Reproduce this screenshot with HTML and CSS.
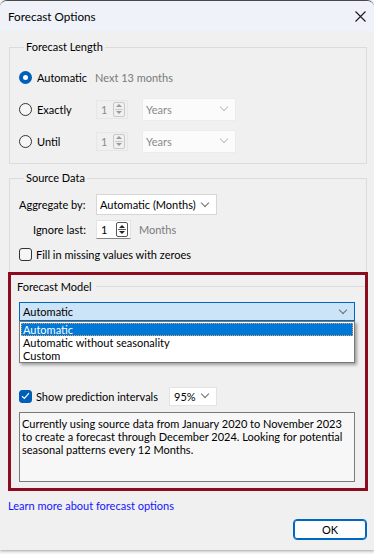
FILE: index.html
```html
<!DOCTYPE html>
<html lang="en">

<head>
    <meta charset="UTF-8" />
    <title>Forecast Options</title>
    <link rel="stylesheet" href="styles.css">
</head>

<body>
    <div class="window">
        <div class="titlebar">
            <span class="title">Forecast Options</span>
            <svg class="close" width="11" height="11" viewBox="0 0 11 11">
                <path d="M0.5 0.5 L10.5 10.5 M10.5 0.5 L0.5 10.5" stroke="#1a1a1a" stroke-width="1.1" fill="none" />
            </svg>
        </div>

        <div class="content">
            <fieldset class="group group-length">
                <legend>Forecast Length</legend>
                <div class="row">
                    <span class="radio checked"></span>
                    <span class="row-label">Automatic</span>
                    <span class="muted">Next 13 months</span>
                </div>
                <div class="row">
                    <span class="radio"></span>
                    <span class="row-label fixed">Exactly</span>
                    <span class="spin disabled">1<span class="spin-arrows"><i class="up"></i><i class="down"></i></span></span>
                    <span class="combo disabled years">Years<span class="chev"></span></span>
                </div>
                <div class="row">
                    <span class="radio"></span>
                    <span class="row-label fixed">Until</span>
                    <span class="spin disabled">1<span class="spin-arrows"><i class="up"></i><i class="down"></i></span></span>
                    <span class="combo disabled years">Years<span class="chev"></span></span>
                </div>
            </fieldset>

            <fieldset class="group group-source">
                <legend>Source Data</legend>
                <div class="row row-src">
                    <span class="field-label">Aggregate by:</span>
                    <span class="combo aggregate">Automatic (Months)<span class="chev"></span></span>
                </div>
                <div class="row row-src">
                    <span class="field-label indent">Ignore last:</span>
                    <span class="spin active">1<span class="spin-arrows"><i class="up"></i><i class="down"></i></span></span>
                    <span class="muted unit">Months</span>
                </div>
                <div class="row row-src">
                    <span class="checkbox"></span>
                    <span class="check-label">Fill in missing values with zeroes</span>
                </div>
            </fieldset>

            <div class="highlight">
                <div class="model-head"><span>Forecast Model</span></div>

                <div class="model-select">
                    <div class="combo selected">Automatic<span class="chev"></span></div>
                    <ul class="dropdown">
                        <li class="item active">Automatic</li>
                        <li class="item">Automatic without seasonality</li>
                        <li class="item">Custom</li>
                    </ul>
                </div>

                <div class="row row-intervals">
                    <span class="checkbox checked">
                        <svg width="9" height="8" viewBox="0 0 9 8">
                            <path d="M1 4.2 L3.4 6.5 L8 1.2" stroke="#fff" stroke-width="1.2" fill="none" />
                        </svg>
                    </span>
                    <span class="check-label wide">Show prediction intervals</span>
                    <span class="combo percent">95%<span class="chev"></span></span>
                </div>

                <div class="summary">
                    Currently using source data from January 2020 to November 2023<br>
                    to create a forecast through December 2024. Looking for potential<br>
                    seasonal patterns every 12 Months.
                </div>
            </div>

            <div class="link">Learn more about forecast options</div>

            <div class="actions">
                <span class="btn">OK</span>
            </div>
        </div>
    </div>
</body>

</html>
```

FILE: styles.css
```css
* {
    margin: 0;
    padding: 0;
    box-sizing: border-box;
}

body {
    font-family: 'Lato', 'Noto Sans', sans-serif;
    font-size: 11px;
    color: #000;
    background: #f7f7f7;
    width: 374px;
    height: 554px;
    overflow: hidden;
    white-space: nowrap;
}

.window {
    background: #f0f0f0;
    border-top: 1px solid #4a4a4a;
    border-radius: 7px 7px 0 0;
    height: 550px;
    box-shadow: 0 1px 3px rgba(0, 0, 0, 0.35);
    overflow: hidden;
}

.titlebar {
    height: 30px;
    background: #eff3f9;
    display: flex;
    align-items: center;
    justify-content: space-between;
    padding: 0 8px 0 8px;
}

.title {
    font-size: 11.7px;
    line-height: 16px;
}

.content {
    padding: 8px 7px 0 9px;
    display: flex;
    flex-direction: column;
}

/* Group boxes */
.group {
    border: 1px solid #dcdcdc;
    padding: 0 9px;
    min-width: 0;
}

.group legend {
    margin-left: 5px;
    padding: 0 2px;
    line-height: 16px;
    height: 16px;
}

.group-length {
    padding-top: 6px;
    padding-bottom: 6px;
}

.group-source {
    margin-top: 6px;
    border-bottom: none;
    padding-top: 6px;
    padding-bottom: 5px;
}

.row {
    display: flex;
    align-items: center;
    height: 32px;
}

.row-src {
    height: 25px;
}

.radio {
    width: 13px;
    height: 13px;
    border-radius: 50%;
    border: 1px solid #333;
    background: #f6f6f6;
    margin-right: 5px;
    flex: none;
}

.radio.checked {
    border: none;
    background: #005fb8;
    position: relative;
}

.radio.checked::after {
    content: '';
    position: absolute;
    left: 4px;
    top: 4px;
    width: 5px;
    height: 5px;
    border-radius: 50%;
    background: #fff;
}

.row-label {
    width: 58px;
}

.row-label.fixed {
    width: 59px;
}

.muted {
    color: #7a7a7a;
}

/* Spinners */
.spin {
    display: flex;
    align-items: center;
    justify-content: space-between;
    height: 19px;
    padding: 0 2px 0 4px;
    flex: none;
}

.spin.disabled {
    width: 32px;
    border: 1px solid #e6e6e6;
    color: #8a8a8a;
    margin-right: 14px;
}

.spin.active {
    width: 35px;
    background: #fff;
    border: 1px solid #e3e3e3;
    border-bottom-color: #868686;
    margin-right: 8px;
}

.spin-arrows {
    width: 12px;
    height: 15px;
    border: 1px solid #c9c9c9;
    border-radius: 2px;
    display: flex;
    flex-direction: column;
    align-items: center;
    justify-content: space-around;
    position: relative;
}

.spin-arrows::after {
    content: '';
    position: absolute;
    left: 1px;
    right: 1px;
    top: 6px;
    height: 1px;
    background: #c9c9c9;
}

.spin.active .spin-arrows {
    border-color: #555;
}

.spin.active .spin-arrows::after {
    background: #555;
}

.spin-arrows i {
    width: 0;
    height: 0;
    border-left: 3px solid transparent;
    border-right: 3px solid transparent;
}

.spin-arrows .up {
    border-bottom: 3px solid #9a9a9a;
}

.spin-arrows .down {
    border-top: 3px solid #9a9a9a;
}

.spin.active .spin-arrows .up {
    border-bottom-color: #222;
}

.spin.active .spin-arrows .down {
    border-top-color: #222;
}

/* Combo boxes */
.combo {
    display: flex;
    align-items: center;
    justify-content: space-between;
    background: #fff;
    border: 1px solid #d6d6d6;
    height: 21px;
    padding: 0 8px 0 3px;
    flex: none;
}

.chev {
    width: 6px;
    height: 6px;
    border-right: 1px solid #6e6e6e;
    border-bottom: 1px solid #6e6e6e;
    transform: translateY(-2px) rotate(45deg);
}

.combo.disabled {
    background: #fbfbfb;
    border-color: #ececec;
    color: #8a8a8a;
    height: 23px;
}

.combo.disabled .chev {
    border-color: #c2c2c2;
}

.combo.years {
    width: 94px;
}

.field-label {
    width: 77px;
    flex: none;
}

.field-label.indent {
    padding-left: 14px;
}

.combo.aggregate {
    width: 121px;
}

.checkbox {
    width: 13px;
    height: 13px;
    border: 1px solid #333;
    border-radius: 3px;
    background: #f6f6f6;
    margin-right: 4px;
    flex: none;
    display: flex;
    align-items: center;
    justify-content: center;
}

.checkbox.checked {
    background: #005fb8;
    border-color: #005fb8;
}

/* Highlighted model section */
.highlight {
    margin: 0 -1px;
    border: 3px solid #8c0b1f;
    padding: 3px 10px 6px 8px;
    display: flex;
    flex-direction: column;
}

.model-head {
    display: flex;
    align-items: center;
    height: 16px;
    margin-left: -2px;
    margin-right: -10px;
}

.model-head::after {
    content: '';
    flex: 1;
    height: 1px;
    background: #dcdcdc;
    margin-left: 4px;
}

.model-select {
    margin-top: 8px;
    position: relative;
}

.combo.selected {
    height: 19px;
    background: #cce4f7;
    border-color: #0067c0;
    padding: 0 8px 0 3px;
}

.dropdown {
    position: absolute;
    left: 0;
    right: 0;
    top: 19px;
    list-style: none;
    background: #fff;
    border: 1px solid #7a7a7a;
    padding: 0 1px;
    box-shadow: 2px 2px 3px rgba(0, 0, 0, 0.35);
    z-index: 2;
}

.item {
    height: 13px;
    line-height: 13px;
    padding-left: 2px;
}

.item.active {
    margin-top: 1px;
    background: #0078d7;
    color: #fff;
    outline: 1px dotted #e8a050;
    outline-offset: -1px;
}

.row-intervals {
    margin-top: 65px;
    height: 20px;
}

.check-label.wide {
    width: 133px;
    flex: none;
}

.combo.percent {
    width: 48px;
    height: 19px;
    border-color: #e3e3e3;
    padding: 0 8px 0 4px;
}

.summary {
    margin-top: 6px;
    height: 70px;
    border: 1px solid #7a7a7a;
    background: #f7f7f7;
    padding: 4px 2px;
    line-height: 13px;
}

.link {
    color: #1414ff;
    margin-top: 7px;
    margin-left: -1px;
    line-height: 16px;
}

.actions {
    display: flex;
    justify-content: flex-end;
    margin-top: 5px;
}

.btn {
    width: 74px;
    height: 21px;
    border: 1px solid #0067c0;
    box-shadow: inset 0 0 0 1px #0067c0;
    border-radius: 4px;
    background: #fdfdfd;
    display: flex;
    align-items: center;
    justify-content: center;
}
```
